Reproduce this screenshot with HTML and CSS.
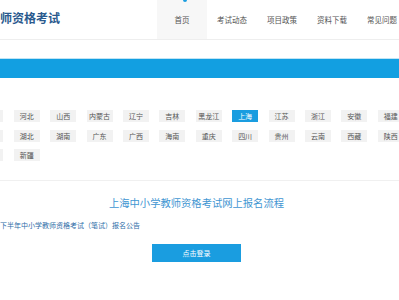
FILE: index.html
```html
<!DOCTYPE html>
<html lang="zh-CN">
<head>
    <meta charset="UTF-8">
    <meta name="viewport" content="width=device-width, initial-scale=1.0">
    <title>教师资格考试</title>
    <link rel="stylesheet" href="styles.css">
</head>
<body>
    <div id="page">
        <div id="header">
            <div id="logo">师资格考试</div>
            <div id="nav">
                <a class="nav-item active">首页</a>
                <a class="nav-item">考试动态</a>
                <a class="nav-item">项目政策</a>
                <a class="nav-item">资料下载</a>
                <a class="nav-item">常见问题</a>
            </div>
        </div>

        <div id="banner"></div>

        <div id="provinces">
            <span class="prov">北京</span>
            <span class="prov">天津</span>
            <span class="prov">河北</span>
            <span class="prov">山西</span>
            <span class="prov">内蒙古</span>
            <span class="prov">辽宁</span>
            <span class="prov">吉林</span>
            <span class="prov">黑龙江</span>
            <span class="prov active">上海</span>
            <span class="prov">江苏</span>
            <span class="prov">浙江</span>
            <span class="prov">安徽</span>
            <span class="prov">福建</span>
            <span class="prov">江西</span>
            <span class="prov">山东</span>
            <span class="prov">河南</span>
            <span class="prov">湖北</span>
            <span class="prov">湖南</span>
            <span class="prov">广东</span>
            <span class="prov">广西</span>
            <span class="prov">海南</span>
            <span class="prov">重庆</span>
            <span class="prov">四川</span>
            <span class="prov">贵州</span>
            <span class="prov">云南</span>
            <span class="prov">西藏</span>
            <span class="prov">陕西</span>
            <span class="prov">甘肃</span>
            <span class="prov">青海</span>
            <span class="prov">宁夏</span>
            <span class="prov">新疆</span>
        </div>

        <div id="content">
            <div id="content-title">上海中小学教师资格考试网上报名流程</div>
            <div id="notice">下半年中小学教师资格考试（笔试）报名公告</div>
            <div id="login-row">
                <a id="login-btn">点击登录</a>
            </div>
        </div>
    </div>
</body>
</html>
```

FILE: styles.css
```css
html, body {
    margin: 0;
    overflow: hidden;
    background: #fff;
}

body {
    font-family: "Noto Sans CJK SC", "Noto Sans", sans-serif;
    color: #555;
}

#page {
    width: 399px;
    height: 300px;
    overflow: hidden;
}

/* cabecera */
#header {
    display: flex;
    height: 39px;
    border-bottom: 1px solid #eeeeee;
}

#logo {
    flex: 0 0 157px;
    font-size: 12px;
    font-weight: bold;
    color: #2a5a8e;
    line-height: 36px;
    white-space: nowrap;
}

#nav {
    display: flex;
}

.nav-item {
    position: relative;
    width: 50px;
    flex: 0 0 50px;
    line-height: 40px;
    font-size: 7.5px;
    color: #555;
    text-align: center;
}

.nav-item.active {
    background-color: #f7f7f7;
}

.nav-item.active::before {
    content: "";
    position: absolute;
    top: 0;
    left: 26px;
    width: 4px;
    height: 2px;
    border-radius: 0 0 2px 2px;
    background-color: #1a9de0;
}

/* barra azul */
#banner {
    margin-top: 18px;
    height: 19px;
    border-top: 1px solid #bfe4f5;
    background-color: #129fe1;
}

/* provincias */
#provinces {
    display: grid;
    grid-template-columns: repeat(14, 26px);
    grid-auto-rows: 12px;
    column-gap: 10.4px;
    row-gap: 7.5px;
    margin-left: -59px;
    margin-top: 32px;
    width: 520px;
}

.prov {
    background-color: #f2f2f2;
    font-size: 7px;
    line-height: 12px;
    text-align: center;
    color: #555;
    white-space: nowrap;
}

.prov.active {
    background-color: #1a9de0;
    color: #fff;
}

/* contenido */
#content {
    margin-top: 19px;
    border-top: 1px solid #f0f0f0;
}

#content-title {
    margin-top: 15px;
    padding-right: 6px;
    text-align: center;
    font-size: 10.3px;
    line-height: 14px;
    color: #3f96d2;
}

#notice {
    margin-top: 10px;
    font-size: 7px;
    line-height: 10px;
    color: #2f6ea8;
    white-space: nowrap;
}

#login-row {
    margin-top: 14px;
    padding-left: 152px;
}

#login-btn {
    display: block;
    width: 89px;
    height: 18px;
    line-height: 18px;
    background-color: #1a9de0;
    color: #fff;
    font-size: 7px;
    text-align: center;
}
```
